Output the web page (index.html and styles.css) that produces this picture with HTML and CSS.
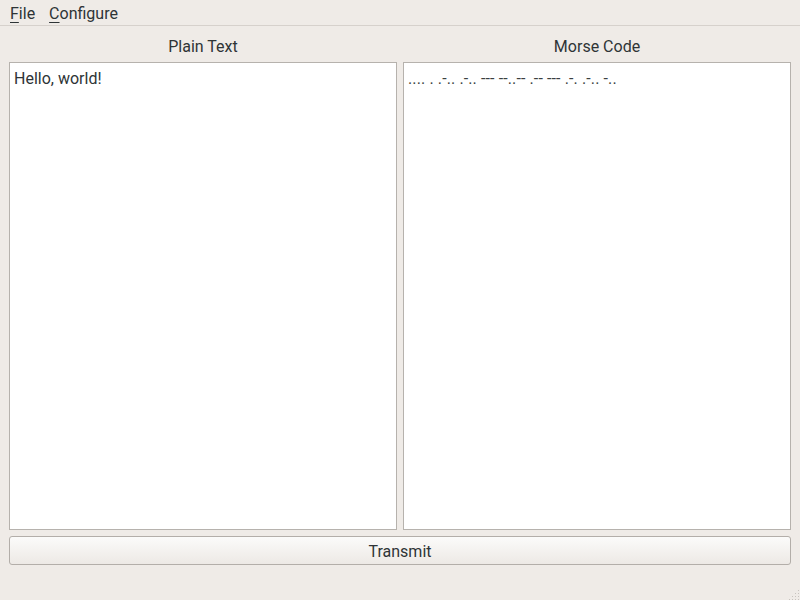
FILE: index.html
```html
<!DOCTYPE html>
<html>
<head>
<meta charset="utf-8">
<link rel="stylesheet" href="styles.css">
</head>
<body>
<div class="window">
  <div class="menubar">
    <span class="menu"><u>F</u>ile</span>
    <span class="menu"><u>C</u>onfigure</span>
  </div>
  <div class="content">
    <div class="panes">
      <div class="pane">
        <div class="label">Plain Text</div>
        <div class="box">Hello, world!</div>
      </div>
      <div class="pane">
        <div class="label">Morse Code</div>
        <div class="box morse">.... . .-.. .-.. --- --..-- .-- --- .-. .-.. -..</div>
      </div>
    </div>
    <button class="btn">Transmit</button>
  </div>
  <div class="grip">
    <svg width="12" height="12" viewBox="0 0 12 12">
      <g fill="#c8c3be">
        <rect x="10" y="2" width="1" height="1"/>
        <rect x="7" y="5" width="1" height="1"/><rect x="10" y="5" width="1" height="1"/>
        <rect x="4" y="8" width="1" height="1"/><rect x="7" y="8" width="1" height="1"/><rect x="10" y="8" width="1" height="1"/>
        <rect x="1" y="11" width="1" height="1"/><rect x="4" y="11" width="1" height="1"/><rect x="7" y="11" width="1" height="1"/><rect x="10" y="11" width="1" height="1"/>
      </g>
    </svg>
  </div>
</div>
</body>
</html>
```
FILE: styles.css
```css
html, body {
  margin: 0;
  padding: 0;
  background: #efebe7;
}
body {
  font-family: Roboto, "Liberation Sans", sans-serif;
  font-size: 16px;
  color: #2e3436;
}
.window {
  width: 800px;
  height: 600px;
  position: relative;
  display: flex;
  flex-direction: column;
}
.menubar {
  height: 26px;
  box-sizing: border-box;
  border-bottom: 1px solid #d6d1cc;
  display: flex;
  align-items: center;
  padding-left: 10px;
  padding-top: 2px;
  gap: 14px;
  line-height: 1;
}
.menu u {
  text-decoration-thickness: 1px;
  text-underline-offset: 3px;
}
.content {
  display: flex;
  flex-direction: column;
  padding: 0 9px;
}
.panes {
  display: flex;
  gap: 6px;
}
.pane {
  flex: 1;
  display: flex;
  flex-direction: column;
}
.label {
  height: 36px;
  display: flex;
  align-items: center;
  justify-content: center;
  padding-top: 4px;
  box-sizing: border-box;
}
.box {
  height: 468px;
  box-sizing: border-box;
  background: #fff;
  border: 1px solid #b6b2ad;
  padding: 6px 4px;
  line-height: 19px;
}
.morse {
  color: #3a3f42;
  letter-spacing: 0.11px;
}
.btn {
  margin-top: 6px;
  height: 29px;
  font-family: inherit;
  font-size: 16px;
  color: #2e3436;
  border: 1px solid #b3aea9;
  border-radius: 3px;
  background: linear-gradient(#fbfbfa, #ede9e5);
  padding: 2px 0 0;
}
.grip {
  position: absolute;
  right: 0;
  bottom: 0;
  width: 12px;
  height: 12px;
  line-height: 0;
}
```
